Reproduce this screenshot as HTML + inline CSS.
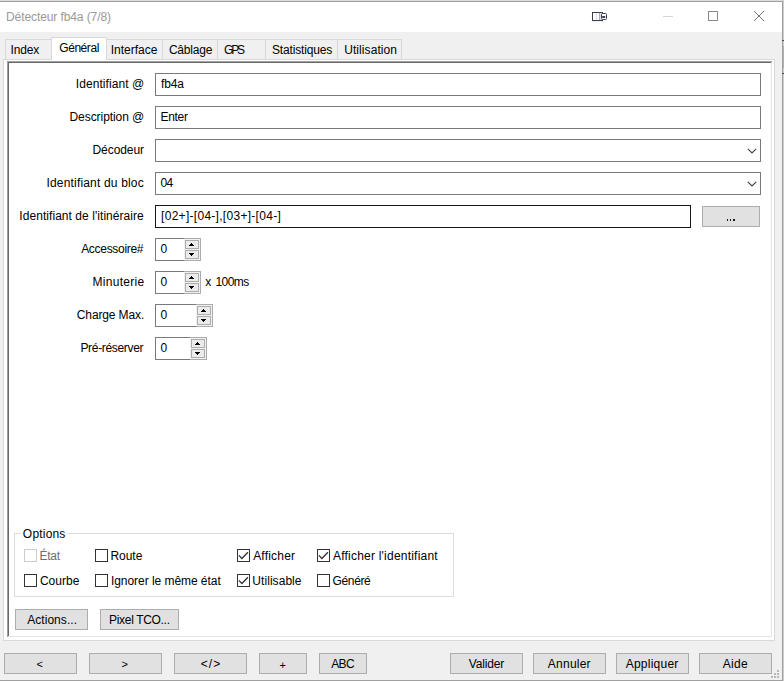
<!DOCTYPE html>
<html lang="fr">
<head>
<meta charset="utf-8">
<title>Détecteur fb4a (7/8)</title>
<style>
html,body{margin:0;padding:0;}
body{width:784px;height:681px;overflow:hidden;position:relative;background:#f0f0f0;font-family:"Liberation Sans",sans-serif;font-size:12px;color:#000;}
div,span,svg{position:absolute;box-sizing:border-box;}
.t{white-space:pre;line-height:14px;height:14px;}
.titlebar{left:0;top:0;width:784px;height:32px;background:#fff;}
.tab{background:#f0f0f0;border:1px solid #d9d9d9;border-bottom:none;}
.tabsel{background:#fff;border:1px solid #d9d9d9;border-bottom:none;}
.pane{background:#fff;border:1px solid #d9d9d9;}
.edit{background:#fff;border:1px solid #7a7a7a;}
.edit.hot{border-color:#171717;}
.btn{background:#e1e1e1;border:1px solid #adadad;}
.spinr{background:#f0f0f0;border:1px solid #acacac;border-left:none;}
.sb{background:#ebebeb;border:1px solid #adadad;}
.px{background:#000;}
.cb{background:#fff;border:1px solid #333;width:13px;height:13px;}
.cb.dis{background:#fff;border-color:#cccccc;}
.grp{border:1px solid #dcdcdc;}
.ln{background:#000;}
</style>
</head>
<body>

<div class="titlebar"></div>
<div class="ln" style="left:0;top:0;width:784px;height:1px;background:#dcdcdc"></div>
<div class="ln" style="left:0;top:1px;width:783px;height:1px;background:#a0a0a0"></div>
<div class="ln" style="left:782px;top:1px;width:1px;height:680px;background:#a0a0a0"></div>
<div class="ln" style="left:783px;top:0;width:1px;height:681px;background:#cdcdcd"></div>
<div class="ln" style="left:783px;top:46px;width:1px;height:22px;background:#b0b0b0"></div>
<div class="ln" style="left:782px;top:40px;width:2px;height:1px;background:#4a4a4a"></div>
<div class="ln" style="left:782px;top:73px;width:2px;height:1px;background:#4a4a4a"></div>
<div class="ln" style="left:0;top:680px;width:783px;height:1px;background:#a0a0a0"></div>
<svg style="left:588px;top:8px" width="24" height="16" viewBox="0 0 24 16">
<rect x="4.5" y="4.5" width="10" height="8" fill="#fff" stroke="#3a3f55" stroke-width="1"/>
<rect x="8" y="5" width="1" height="7" fill="#dcdce2"/><rect x="11" y="5" width="1" height="7" fill="#a9abb8"/><rect x="12" y="5" width="1" height="7" fill="#e4e4ea"/>
<rect x="3" y="13" width="13" height="1" fill="#ececec"/>
<rect x="13.5" y="5.5" width="5" height="6" rx="0.9" fill="#fff" stroke="#3a3f55" stroke-width="1"/>
<rect x="14.2" y="8" width="3" height="2" fill="#3a3f55"/>
</svg>
<div class="ln" style="left:663px;top:16px;width:10px;height:1px;background:#d6d6d6"></div>
<div style="left:708px;top:11px;width:10px;height:10px;border:1px solid #8a8a8a"></div>
<svg style="left:753px;top:10px" width="12" height="12" viewBox="0 0 12 12"><path d="M1 1 L11 11 M11 1 L1 11" stroke="#777" stroke-width="1" fill="none"/></svg>
<div class="pane" style="left:3px;top:59px;width:772px;height:582px;"></div>
<div class="tab" style="left:5px;top:39px;width:47px;height:20px;"></div>
<div class="tab" style="left:106px;top:39px;width:57px;height:20px;"></div>
<div class="tab" style="left:162px;top:39px;width:56px;height:20px;"></div>
<div class="tab" style="left:217px;top:39px;width:49px;height:20px;"></div>
<div class="tab" style="left:265px;top:39px;width:73px;height:20px;"></div>
<div class="tab" style="left:337px;top:39px;width:65px;height:20px;"></div>
<div class="tabsel" style="left:51px;top:37px;width:56px;height:23px;"></div>
<div class="ln" style="left:7px;top:61px;width:765px;height:1px;background:#a0a0a0"></div>
<div class="ln" style="left:7px;top:61px;width:1px;height:576px;background:#a0a0a0"></div>
<div class="ln" style="left:8px;top:62px;width:763px;height:1px;background:#696969"></div>
<div class="ln" style="left:8px;top:62px;width:1px;height:574px;background:#696969"></div>
<div class="ln" style="left:8px;top:636px;width:764px;height:1px;background:#e3e3e3"></div>
<div class="ln" style="left:771px;top:62px;width:1px;height:575px;background:#e3e3e3"></div>
<div class="edit" style="left:155px;top:73px;width:606px;height:23px;"></div>
<div class="edit" style="left:155px;top:106px;width:606px;height:23px;"></div>
<div class="edit" style="left:155px;top:139px;width:606px;height:23px;"></div>
<div class="edit" style="left:155px;top:172px;width:606px;height:23px;"></div>
<div class="edit hot" style="left:155px;top:205px;width:536px;height:23px;"></div>
<svg style="left:747px;top:148px" width="10" height="6" viewBox="0 0 10 6"><path d="M0.8 0.8 L5 5 L9.2 0.8" stroke="#404040" stroke-width="1.1" fill="none"/></svg>
<svg style="left:747px;top:181px" width="10" height="6" viewBox="0 0 10 6"><path d="M0.8 0.8 L5 5 L9.2 0.8" stroke="#404040" stroke-width="1.1" fill="none"/></svg>
<div class="btn" style="left:702px;top:206px;width:58px;height:21px;"></div>
<div style="left:726.6px;top:219px;width:1.6px;height:2px;background:#1a1a1a"></div>
<div style="left:729.8px;top:219px;width:1.6px;height:2px;background:#1a1a1a"></div>
<div style="left:733.0px;top:219px;width:1.6px;height:2px;background:#1a1a1a"></div>
<div class="edit" style="left:155px;top:238px;width:29px;height:23px;border-right:none;"></div>
<div class="spinr" style="left:184px;top:238px;width:17px;height:23px;"></div>
<div class="sb" style="left:185px;top:240px;width:14px;height:9px;"></div>
<div class="sb" style="left:185px;top:250px;width:14px;height:9px;"></div>
<div class="px" style="left:191px;top:243px;width:1px;height:1px"></div><div class="px" style="left:190px;top:244px;width:3px;height:1px"></div><div class="px" style="left:189px;top:245px;width:5px;height:1px"></div>
<div class="px" style="left:189px;top:253px;width:5px;height:1px"></div><div class="px" style="left:190px;top:254px;width:3px;height:1px"></div><div class="px" style="left:191px;top:255px;width:1px;height:1px"></div>
<div class="edit" style="left:155px;top:271px;width:29px;height:23px;border-right:none;"></div>
<div class="spinr" style="left:184px;top:271px;width:17px;height:23px;"></div>
<div class="sb" style="left:185px;top:273px;width:14px;height:9px;"></div>
<div class="sb" style="left:185px;top:283px;width:14px;height:9px;"></div>
<div class="px" style="left:191px;top:276px;width:1px;height:1px"></div><div class="px" style="left:190px;top:277px;width:3px;height:1px"></div><div class="px" style="left:189px;top:278px;width:5px;height:1px"></div>
<div class="px" style="left:189px;top:286px;width:5px;height:1px"></div><div class="px" style="left:190px;top:287px;width:3px;height:1px"></div><div class="px" style="left:191px;top:288px;width:1px;height:1px"></div>
<div class="edit" style="left:155px;top:304px;width:41px;height:23px;border-right:none;"></div>
<div class="spinr" style="left:196px;top:304px;width:17px;height:23px;"></div>
<div class="sb" style="left:197px;top:306px;width:14px;height:9px;"></div>
<div class="sb" style="left:197px;top:316px;width:14px;height:9px;"></div>
<div class="px" style="left:203px;top:309px;width:1px;height:1px"></div><div class="px" style="left:202px;top:310px;width:3px;height:1px"></div><div class="px" style="left:201px;top:311px;width:5px;height:1px"></div>
<div class="px" style="left:201px;top:319px;width:5px;height:1px"></div><div class="px" style="left:202px;top:320px;width:3px;height:1px"></div><div class="px" style="left:203px;top:321px;width:1px;height:1px"></div>
<div class="edit" style="left:155px;top:337px;width:35px;height:23px;border-right:none;"></div>
<div class="spinr" style="left:190px;top:337px;width:17px;height:23px;"></div>
<div class="sb" style="left:191px;top:339px;width:14px;height:9px;"></div>
<div class="sb" style="left:191px;top:349px;width:14px;height:9px;"></div>
<div class="px" style="left:197px;top:342px;width:1px;height:1px"></div><div class="px" style="left:196px;top:343px;width:3px;height:1px"></div><div class="px" style="left:195px;top:344px;width:5px;height:1px"></div>
<div class="px" style="left:195px;top:352px;width:5px;height:1px"></div><div class="px" style="left:196px;top:353px;width:3px;height:1px"></div><div class="px" style="left:197px;top:354px;width:1px;height:1px"></div>
<div class="grp" style="left:14px;top:533px;width:440px;height:64px;"></div>
<div style="left:21px;top:530px;width:46px;height:8px;background:#fff"></div>
<div class="cb dis" style="left:24px;top:549px"></div>
<div class="cb" style="left:95px;top:549px"></div>
<div class="cb" style="left:237px;top:549px"><svg style="left:0;top:0" width="11" height="11" viewBox="0 0 11 11"><path d="M0.9 5.4 L3.9 8.5 L9.9 2.3" stroke="#333" stroke-width="1.3" fill="none"/></svg></div>
<div class="cb" style="left:317px;top:549px"><svg style="left:0;top:0" width="11" height="11" viewBox="0 0 11 11"><path d="M0.9 5.4 L3.9 8.5 L9.9 2.3" stroke="#333" stroke-width="1.3" fill="none"/></svg></div>
<div class="cb" style="left:24px;top:574px"></div>
<div class="cb" style="left:95px;top:574px"></div>
<div class="cb" style="left:237px;top:574px"><svg style="left:0;top:0" width="11" height="11" viewBox="0 0 11 11"><path d="M0.9 5.4 L3.9 8.5 L9.9 2.3" stroke="#333" stroke-width="1.3" fill="none"/></svg></div>
<div class="cb" style="left:317px;top:574px"></div>
<div class="btn" style="left:15px;top:609px;width:73px;height:21px;"></div>
<div class="btn" style="left:100px;top:609px;width:79px;height:21px;"></div>
<div class="btn" style="left:4px;top:653px;width:73px;height:21px;"></div>
<div class="btn" style="left:89px;top:653px;width:73px;height:21px;"></div>
<div class="btn" style="left:174px;top:653px;width:73px;height:21px;"></div>
<div class="btn" style="left:259px;top:653px;width:48px;height:21px;"></div>
<div class="btn" style="left:319px;top:653px;width:48px;height:21px;"></div>
<div class="btn" style="left:450px;top:653px;width:73px;height:21px;"></div>
<div class="btn" style="left:533px;top:653px;width:73px;height:21px;"></div>
<div class="btn" style="left:616px;top:653px;width:73px;height:21px;"></div>
<div class="btn" style="left:699px;top:653px;width:73px;height:21px;"></div>
<div style="left:777px;top:670px;width:2px;height:2px;background:#b8b8b8"></div>
<div style="left:774px;top:673px;width:2px;height:2px;background:#b8b8b8"></div>
<div style="left:777px;top:673px;width:2px;height:2px;background:#b8b8b8"></div>
<div style="left:771px;top:676px;width:2px;height:2px;background:#b8b8b8"></div>
<div style="left:774px;top:676px;width:2px;height:2px;background:#b8b8b8"></div>
<div style="left:777px;top:676px;width:2px;height:2px;background:#b8b8b8"></div>
<span class="t" id="t0" style="left:5.99px;top:10px;letter-spacing:-0.090px;color:#999999;">Détecteur fb4a (7/8)</span>
<span class="t" id="t1" style="left:10.51px;top:43px;letter-spacing:-0.138px;">Index</span>
<span class="t" id="t2" style="left:59.26px;top:41px;letter-spacing:-0.436px;">Général</span>
<span class="t" id="t3" style="left:110.69px;top:43px;letter-spacing:0.005px;">Interface</span>
<span class="t" id="t4" style="left:168.91px;top:43px;letter-spacing:-0.204px;">Câblage</span>
<span class="t" id="t5" style="left:223.91px;top:43px;letter-spacing:-2.089px;">GPS</span>
<span class="t" id="t6" style="left:271.95px;top:43px;letter-spacing:-0.151px;">Statistiques</span>
<span class="t" id="t7" style="left:344.17px;top:43px;letter-spacing:0.083px;">Utilisation</span>
<span class="t" id="t8" style="left:75.75px;top:77px;letter-spacing:0.076px;">Identifiant @</span>
<span class="t" id="t9" style="left:69.53px;top:110px;letter-spacing:-0.063px;">Description @</span>
<span class="t" id="t10" style="left:92.53px;top:143px;letter-spacing:-0.068px;">Décodeur</span>
<span class="t" id="t11" style="left:46.53px;top:176px;letter-spacing:0.173px;">Identifiant du bloc</span>
<span class="t" id="t12" style="left:19.37px;top:209px;letter-spacing:0.053px;">Identifiant de l'itinéraire</span>
<span class="t" id="t13" style="left:81.15px;top:242px;letter-spacing:-0.298px;">Accessoire#</span>
<span class="t" id="t14" style="left:92.53px;top:275px;letter-spacing:0.278px;">Minuterie</span>
<span class="t" id="t15" style="left:76.79px;top:308px;letter-spacing:-0.122px;">Charge Max.</span>
<span class="t" id="t16" style="left:80.46px;top:341px;letter-spacing:-0.333px;">Pré-réserver</span>
<span class="t" id="t17" style="left:161.08px;top:77px;letter-spacing:-0.161px;">fb4a</span>
<span class="t" id="t18" style="left:160.46px;top:110px;letter-spacing:-0.282px;">Enter</span>
<span class="t" id="t19" style="left:160.59px;top:176px;letter-spacing:-0.687px;">04</span>
<span class="t" id="t20" style="left:161.07px;top:209px;letter-spacing:0.286px;">[02+]-[04-],[03+]-[04-]</span>
<span class="t" id="t21" style="left:160.43px;top:242px;">0</span>
<span class="t" id="t22" style="left:160.43px;top:275px;">0</span>
<span class="t" id="t23" style="left:160.43px;top:308px;">0</span>
<span class="t" id="t24" style="left:160.43px;top:341px;">0</span>
<span class="t" id="t25" style="left:205.36px;top:275px;letter-spacing:-0.593px;word-spacing:2px;">x 100ms</span>
<span class="t" id="t26" style="left:22.87px;top:527px;letter-spacing:0.191px;">Options</span>
<span class="t" id="t27" style="left:39.53px;top:549px;letter-spacing:-0.281px;color:#6d6d6d;">État</span>
<span class="t" id="t28" style="left:110.41px;top:549px;letter-spacing:-0.027px;">Route</span>
<span class="t" id="t29" style="left:253.15px;top:549px;letter-spacing:0.203px;">Afficher</span>
<span class="t" id="t30" style="left:332.93px;top:549px;letter-spacing:0.221px;">Afficher l'identifiant</span>
<span class="t" id="t31" style="left:39.91px;top:574px;letter-spacing:0.031px;">Courbe</span>
<span class="t" id="t32" style="left:110.95px;top:574px;letter-spacing:-0.048px;">Ignorer le même état</span>
<span class="t" id="t33" style="left:252.34px;top:574px;letter-spacing:0.054px;">Utilisable</span>
<span class="t" id="t34" style="left:332.60px;top:574px;letter-spacing:-0.381px;">Généré</span>
<span class="t" id="t35" style="left:27.20px;top:613px;letter-spacing:0.051px;">Actions...</span>
<span class="t" id="t36" style="left:109.10px;top:613px;letter-spacing:-0.326px;">Pixel TCO...</span>
<span class="t" id="t37" style="left:36.58px;top:657px;font-size:11px;">&lt;</span>
<span class="t" id="t38" style="left:121.55px;top:657px;font-size:11px;">&gt;</span>
<span class="t" id="t39" style="left:200.70px;top:657px;letter-spacing:1.089px;">&lt;/&gt;</span>
<span class="t" id="t40" style="left:279.59px;top:658px;font-size:11px;">+</span>
<span class="t" id="t41" style="left:331.15px;top:657px;letter-spacing:-0.565px;">ABC</span>
<span class="t" id="t42" style="left:468.87px;top:657px;letter-spacing:-0.170px;">Valider</span>
<span class="t" id="t43" style="left:547.87px;top:657px;letter-spacing:0.224px;">Annuler</span>
<span class="t" id="t44" style="left:625.67px;top:657px;letter-spacing:0.250px;">Appliquer</span>
<span class="t" id="t45" style="left:722.67px;top:657px;letter-spacing:0.306px;">Aide</span>
</body>
</html>
